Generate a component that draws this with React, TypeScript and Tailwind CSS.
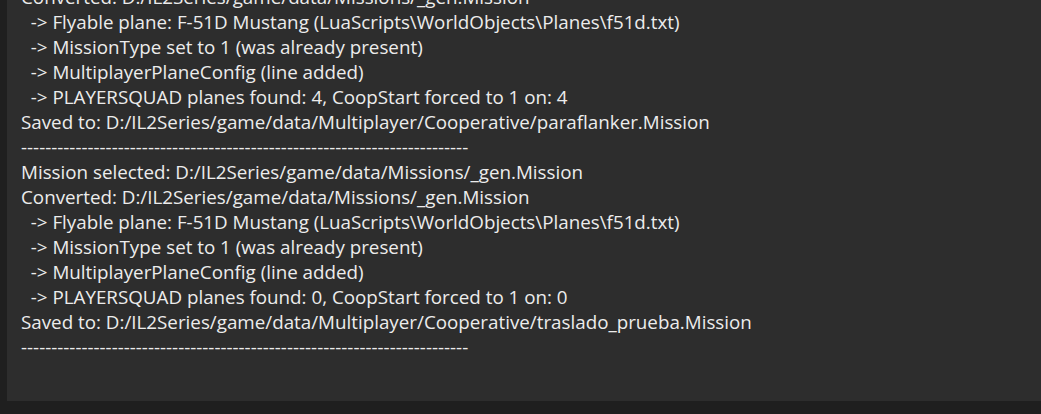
const dashes = "-".repeat(74);

const lines = [
  "Converted: D:/IL2Series/game/data/Missions/_gen.Mission",
  "  -> Flyable plane: F-51D Mustang (LuaScripts\\WorldObjects\\Planes\\f51d.txt)",
  "  -> MissionType set to 1 (was already present)",
  "  -> MultiplayerPlaneConfig (line added)",
  "  -> PLAYERSQUAD planes found: 4, CoopStart forced to 1 on: 4",
  "Saved to: D:/IL2Series/game/data/Multiplayer/Cooperative/paraflanker.Mission",
  dashes,
  "Mission selected: D:/IL2Series/game/data/Missions/_gen.Mission",
  "Converted: D:/IL2Series/game/data/Missions/_gen.Mission",
  "  -> Flyable plane: F-51D Mustang (LuaScripts\\WorldObjects\\Planes\\f51d.txt)",
  "  -> MissionType set to 1 (was already present)",
  "  -> MultiplayerPlaneConfig (line added)",
  "  -> PLAYERSQUAD planes found: 0, CoopStart forced to 1 on: 0",
  "Saved to: D:/IL2Series/game/data/Multiplayer/Cooperative/traslado_prueba.Mission",
  dashes,
];

export default function App() {
  return (
    <div className="w-[1041px] h-[414px] bg-[#1f1f1f] flex flex-col overflow-hidden">
      <div className="flex-1 flex min-h-0">
        <div className="w-[7px] bg-[#1f1f1f]" />
        <div className="flex-1 bg-[#2d2d2d] overflow-hidden pl-[14px]">
          <div
            className="-mt-[15px] text-[#ececec] text-[18.8px] leading-[25px] whitespace-pre"
            style={{ fontFamily: '"Open Sans", "Noto Sans", sans-serif' }}
          >
            {lines.map((l, i) => (
              <div key={i}>{l}</div>
            ))}
          </div>
        </div>
      </div>
      <div className="h-[13px] bg-[#1f1f1f]" />
    </div>
  );
}
